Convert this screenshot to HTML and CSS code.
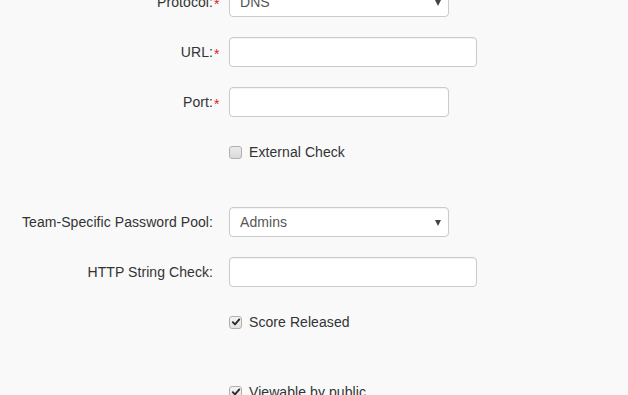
FILE: index.html
```html
<!DOCTYPE html>
<html>
<head>
<meta charset="utf-8">
<link rel="stylesheet" href="styles.css">
</head>
<body>
<form class="form">
  <div class="row">
    <div class="label"><span class="req">Protocol:</span></div>
    <div class="control"><div class="field select narrow"><span class="value">DNS</span><span class="caret"></span></div></div>
  </div>
  <div class="row">
    <div class="label"><span class="req">URL:</span></div>
    <div class="control"><div class="field wide"></div></div>
  </div>
  <div class="row">
    <div class="label"><span class="req">Port:</span></div>
    <div class="control"><div class="field narrow"></div></div>
  </div>
  <div class="row check-row">
    <div class="label"></div>
    <div class="control"><label class="check"><span class="box"></span>External Check</label></div>
  </div>
  <div class="row">
    <div class="label">Team-Specific Password Pool:</div>
    <div class="control"><div class="field select narrow"><span class="value">Admins</span><span class="caret"></span></div></div>
  </div>
  <div class="row">
    <div class="label">HTTP String Check:</div>
    <div class="control"><div class="field wide"></div></div>
  </div>
  <div class="row check-row">
    <div class="label"></div>
    <div class="control"><label class="check"><span class="box checked"><svg viewBox="0 0 10 10" width="10" height="10"><path d="M1.8 5.2 L4 7.4 L8.3 2.4" fill="none" stroke="#2b2b2b" stroke-width="1.9" stroke-linecap="round" stroke-linejoin="round"/></svg></span>Score Released</label></div>
  </div>
  <div class="row check-row">
    <div class="label"></div>
    <div class="control"><label class="check"><span class="box checked"><svg viewBox="0 0 10 10" width="10" height="10"><path d="M1.8 5.2 L4 7.4 L8.3 2.4" fill="none" stroke="#2b2b2b" stroke-width="1.9" stroke-linecap="round" stroke-linejoin="round"/></svg></span>Viewable by public</label></div>
  </div>
</form>
</body>
</html>
```

FILE: styles.css
```css
html, body {
  margin: 0;
  padding: 0;
  background: #f9f9f9;
  height: 100%;
  overflow: hidden;
}
body {
  font-family: "Liberation Sans", Arial, sans-serif;
  font-size: 14px;
  line-height: 20px;
  letter-spacing: 0.07px;
  color: #333;
}
.form {
  margin: -13px 0 0 0;
  display: flex;
  flex-direction: column;
  gap: 20px;
}
.row {
  display: grid;
  grid-template-columns: 213px 1fr;
  column-gap: 16px;
  align-items: center;
  min-height: 30px;
}
.check-row {
  margin-bottom: 20px;
}
.label {
  text-align: right;
  color: #333;
}
.req {
  position: relative;
}
.req::after {
  content: "*";
  color: #e0201e;
  position: absolute;
  left: 100%;
  top: 0;
  margin-left: 1px;
}
.field {
  box-sizing: border-box;
  height: 30px;
  background: #fff;
  border: 1px solid #cacaca;
  border-radius: 4px;
  box-shadow: inset 0 1px 1px rgba(0,0,0,0.05);
}
.narrow { width: 220px; }
.wide { width: 248px; }
.select {
  display: flex;
  align-items: center;
  justify-content: space-between;
  padding: 0 7px 0 10px;
  color: #555;
}
.caret {
  width: 0;
  height: 0;
  border-left: 3.5px solid transparent;
  border-right: 3.5px solid transparent;
  border-top: 6px solid #444;
  margin-top: 1px;
}
.check {
  display: flex;
  align-items: center;
  gap: 7px;
  color: #333;
}
.box {
  box-sizing: border-box;
  width: 13px;
  height: 13px;
  border: 1px solid #b0b0b0;
  border-radius: 3px;
  background: linear-gradient(#ebebeb, #d9d9d9);
  display: flex;
  align-items: center;
  justify-content: center;
}
.box.checked {
  background: linear-gradient(#f4f4f4, #e2e2e2);
}
```
